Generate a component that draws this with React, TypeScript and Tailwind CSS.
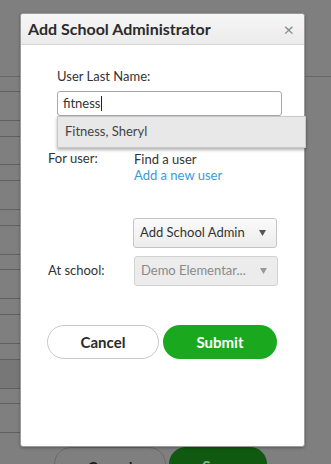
import React from "react";

const rows = [76, 91, 120, 136, 164, 180, 209, 225, 254, 269, 298, 314, 343, 359, 388, 403, 432];

function Caret() {
  return (
    <svg width="7" height="6" viewBox="0 0 7 6" className="block">
      <path d="M0 0 L7 0 L3.5 6 Z" fill="currentColor" />
    </svg>
  );
}

export default function App() {
  return (
    <div
      className="relative w-[331px] h-[464px] overflow-hidden bg-[#7f7f7f]"
      style={{ fontFamily: "Lato, 'Open Sans', sans-serif" }}
    >
      {/* background page lines */}
      {rows.map((y, i) => (
        <div
          key={y}
          className={`absolute left-0 h-px ${i === 0 ? "w-[331px] bg-[#5e6b6b]" : "w-[20px] bg-[#606060]"}`}
          style={{ top: y }}
        />
      ))}
      <div className="absolute left-0 top-[360px] w-[20px] h-[28px] bg-[#777]" />
      {/* background buttons */}
      <div className="absolute left-[54px] top-[447px] w-[112px] h-[34px] rounded-full border border-[#6a6a6a] flex justify-center pt-[8px] text-[15px] font-bold text-[#1a1a1a]">
        Cancel
      </div>
      <div className="absolute left-[169px] top-[447px] w-[98px] h-[34px] rounded-full bg-[#0f5a10] flex justify-center pt-[8px] text-[15px] font-bold text-[#8fb08f]">
        Save
      </div>

      {/* modal */}
      <div className="absolute left-[20px] top-[13px] w-[285px] h-[434px] bg-white rounded-[3px] border border-[#9a9a9a] shadow-[0_1px_3px_rgba(0,0,0,0.3)]">
        <div className="h-[31px] flex items-center justify-between pl-[7px] pr-[10px] bg-gradient-to-b from-[#f6f6f6] to-[#ebebeb] border-b border-[#d6d6d6] rounded-t-[3px]">
          <span className="text-[16px] font-bold text-[#2b2b2b]">Add School Administrator</span>
          <span className="text-[18px] text-[#8a8a8a] leading-none">×</span>
        </div>

        <div className="relative pl-[36px] pt-[23px]">
          <div className="text-[13px] text-[#333] leading-[17px]">User Last Name:</div>
          <div className="mt-[6px] w-[225px] h-[25px] border border-[#a8a8a8] rounded-[3px] flex items-center pl-[5px] text-[13px] text-[#333]">
            fitness<span className="inline-block w-px h-[15px] bg-[#222] ml-px" />
          </div>
          {/* autocomplete */}
          <div className="absolute left-[36px] top-[71px] z-10 w-[249px] h-[32px] bg-[#e8e8e8] border border-[#c8c8c8] shadow-[0_2px_3px_rgba(0,0,0,0.3)] flex items-center pl-[7px] text-[13px] text-[#444]">
            Fitness, Sheryl
          </div>
        </div>

        <div className="pl-[27px] pt-[34px] flex">
          <div className="w-[86px] text-[13px] text-[#333] leading-[16px]">For user:</div>
          <div className="text-[13px] leading-[16px] pt-px">
            <div className="text-[#333]">Find a user</div>
            <div className="text-[#3b9ad6]">Add a new user</div>
          </div>
        </div>

        <div className="pl-[112px] pt-[35px]">
          <div className="w-[144px] h-[30px] rounded-[3px] border border-[#c4c4c4] bg-gradient-to-b from-[#fafafa] to-[#ececec] flex items-center justify-between pl-[6px] pr-[10px] text-[13px] text-[#333]">
            <span>Add School Admin</span>
            <span className="text-[#555]"><Caret /></span>
          </div>
        </div>

        <div className="pl-[27px] pt-[8px] flex items-center">
          <div className="w-[86px] text-[13px] text-[#333]">At school:</div>
          <div className="w-[144px] h-[30px] rounded-[3px] border border-[#d2d2d2] bg-[#ececec] flex items-center justify-between pl-[6px] pr-[10px] text-[13px] text-[#8a8a8a]">
            <span>Demo Elementar...</span>
            <span className="text-[#999]"><Caret /></span>
          </div>
        </div>

        <div className="pl-[26px] pt-[39px] flex gap-[4px]">
          <div className="w-[112px] h-[34px] rounded-full border border-[#c9c9c9] flex items-center justify-center text-[15px] font-bold text-[#2a2a2a]">
            Cancel
          </div>
          <div className="w-[114px] h-[34px] rounded-full bg-[#1aa91e] flex items-center justify-center text-[15px] font-bold text-white">
            Submit
          </div>
        </div>
      </div>
    </div>
  );
}
